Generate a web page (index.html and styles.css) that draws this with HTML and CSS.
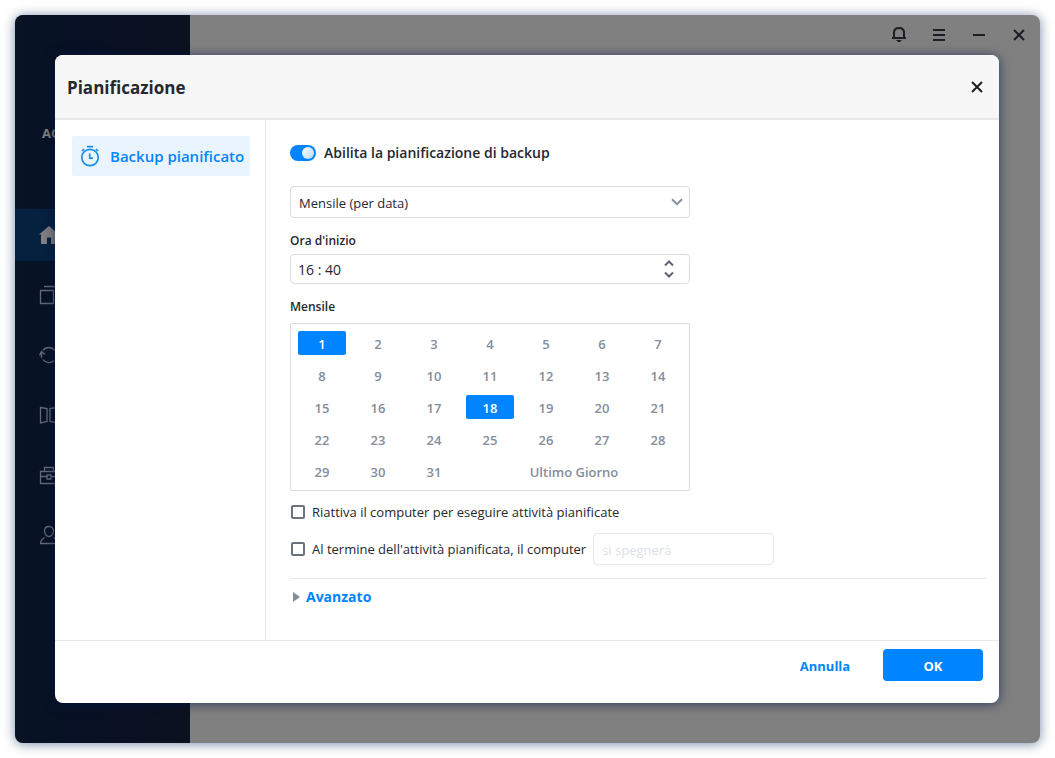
FILE: index.html
```html
<!DOCTYPE html>
<html lang="it">
<head>
  <meta charset="UTF-8">
  <meta name="viewport" content="width=device-width, initial-scale=1.0">
  <title>Pianificazione</title>
  <link rel="stylesheet" href="styles.css">
</head>
<body>
  <div class="window">
    <aside class="sidebar">
      <div class="brand">AO</div>
      <nav class="menu">
        <a href="#" class="menu-item active" aria-label="Home">
          <svg width="20" height="20" viewBox="0 0 20 20"><path d="M10 1 0 9.500h2V19h6v-6.500h4V19h6V9.500h2z" fill="currentColor"/></svg>
        </a>
        <a href="#" class="menu-item" aria-label="Backup">
          <svg width="20" height="20" viewBox="0 0 20 20" class="line"><path d="M1.500 5.500h13v13h-13zM5 1.500h13.500V15"/></svg>
        </a>
        <a href="#" class="menu-item" aria-label="Sync">
          <svg width="20" height="20" viewBox="0 0 20 20" class="line"><path d="M4 5.500A7 7 0 0 1 15.500 5.500M17 9a7 7 0 0 1-.5 3.500M15 15.500a7 7 0 0 1-11-1M2.500 13V7M.5 10.500l2-4 3.500 3"/></svg>
        </a>
        <a href="#" class="menu-item" aria-label="Clone">
          <svg width="20" height="20" viewBox="0 0 20 20" class="line"><path d="M1.500 2.500 8 3.500v13l-6.500 1.500zM18.500 2.500 11 3.500v13l7.500 1.500z"/></svg>
        </a>
        <a href="#" class="menu-item" aria-label="Tools">
          <svg width="20" height="20" viewBox="0 0 20 20" class="line"><path d="M1.500 6.500h17v12h-17zM5.500 6V2.500h9V6M1.500 11.500H8M12 11.500h6.500M8 10h4v4H8z"/></svg>
        </a>
        <a href="#" class="menu-item" aria-label="Account">
          <svg width="20" height="20" viewBox="0 0 20 20" class="line"><path d="M10 1.500c-3 0-4.500 2-4.500 4.500 0 3 2 5.500 4.500 5.500s4.500-2.500 4.500-5.500c0-2.500-1.500-4.500-4.500-4.500zM5.500 12.500C3 14 1.500 15.500 1.500 18.500h17c0-3-1.500-4.500-4-6"/></svg>
        </a>
      </nav>
    </aside>
    <div class="titlebar">
      <button type="button" class="icon-button" aria-label="Notifiche">
        <svg width="16" height="16" viewBox="0 0 16 16"><path d="M3 11V5.500C3 2.500 5 1 8 1s5 1.500 5 4.500V11M1 11h14"/><path d="M5 13h6l-2 2H7z" fill="currentColor" stroke="none"/></svg>
      </button>
      <button type="button" class="icon-button" aria-label="Menu">
        <svg width="16" height="16" viewBox="0 0 16 16"><path d="M2 3h12M2 8h12M2 13h12"/></svg>
      </button>
      <button type="button" class="icon-button" aria-label="Riduci">
        <svg width="16" height="16" viewBox="0 0 16 16"><path d="M2 8h12"/></svg>
      </button>
      <button type="button" class="icon-button" aria-label="Esci">
        <svg width="16" height="16" viewBox="0 0 16 16"><path d="m3 3 10 10M13 3 3 13"/></svg>
      </button>
    </div>

    <section class="dialog" role="dialog" aria-labelledby="dialog-title">
      <header class="dialog-header">
        <h1 id="dialog-title">Pianificazione</h1>
        <button type="button" class="icon-button" aria-label="Chiudi">
          <svg width="16" height="16" viewBox="0 0 16 16"><path d="m3 3 10 10M13 3 3 13"/></svg>
        </button>
      </header>

      <div class="dialog-body">
        <nav class="tabs">
          <a href="#" class="tab">
            <svg width="20" height="22" viewBox="0 0 20 22"><circle cx="10" cy="12.500" r="8.200"/><path d="M7 1.700h6M2 6l2-2M18 6l-2-2M9.700 8.500v4.700H13"/></svg>
            Backup pianificato
          </a>
        </nav>

        <form class="settings">
          <label class="switch-row">
            <input type="checkbox" class="switch" checked>
            Abilita la pianificazione di backup
          </label>

          <div class="select-wrap">
            <select class="control" aria-label="Frequenza">
              <option>Mensile (per data)</option>
            </select>
            <svg class="chevron" width="12" height="8" viewBox="0 0 12 8"><path d="m1 1.200 5 5 5-5"/></svg>
          </div>

          <label class="field-label" for="start-time">Ora d'inizio</label>
          <div class="time-box">
            <input type="text" id="start-time" value="16 : 40">
            <div class="spin">
              <button type="button" aria-label="Aumenta"><svg width="10" height="7" viewBox="0 0 10 7"><path d="m1 5.500 4-4 4 4"/></svg></button>
              <button type="button" aria-label="Diminuisci"><svg width="10" height="7" viewBox="0 0 10 7"><path d="m1 1.500 4 4 4-4"/></svg></button>
            </div>
          </div>

          <div class="field-label" id="month-label">Mensile</div>
          <div class="days" role="group" aria-labelledby="month-label">
            <button type="button" class="selected" aria-pressed="true">1</button>
            <button type="button">2</button>
            <button type="button">3</button>
            <button type="button">4</button>
            <button type="button">5</button>
            <button type="button">6</button>
            <button type="button">7</button>
            <button type="button">8</button>
            <button type="button">9</button>
            <button type="button">10</button>
            <button type="button">11</button>
            <button type="button">12</button>
            <button type="button">13</button>
            <button type="button">14</button>
            <button type="button">15</button>
            <button type="button">16</button>
            <button type="button">17</button>
            <button type="button" class="selected" aria-pressed="true">18</button>
            <button type="button">19</button>
            <button type="button">20</button>
            <button type="button">21</button>
            <button type="button">22</button>
            <button type="button">23</button>
            <button type="button">24</button>
            <button type="button">25</button>
            <button type="button">26</button>
            <button type="button">27</button>
            <button type="button">28</button>
            <button type="button">29</button>
            <button type="button">30</button>
            <button type="button">31</button>
            <button type="button" class="last-day">Ultimo Giorno</button>
          </div>

          <div class="check-row">
            <input type="checkbox" class="check" id="wake">
            <label for="wake">Riattiva il computer per eseguire attività pianificate</label>
          </div>
          <div class="check-row">
            <input type="checkbox" class="check" id="after">
            <label for="after">Al termine dell'attività pianificata, il computer</label>
            <select class="control after-action" aria-label="Azione al termine" disabled>
              <option>si spegnerà</option>
            </select>
          </div>

          <div class="advanced">
            <button type="button" aria-expanded="false">Avanzato</button>
          </div>
        </form>
      </div>

      <footer class="dialog-footer">
        <button type="button" class="btn">Annulla</button>
        <button type="button" class="btn primary">OK</button>
      </footer>
    </section>
  </div>
</body>
</html>
```
FILE: styles.css
```css
* {
  margin: 0;
  padding: 0;
  box-sizing: border-box;
}
body {
  min-height: 100vh;
  padding: 15px;
  display: flex;
  background-color: #fff;
  color: #24282f;
  font-family: "Segoe UI", "Open Sans", "Noto Sans", sans-serif;
  font-size: 13px;
  line-height: 20px;
}
button, input, select {
  font: inherit;
  color: inherit;
}
button {
  border: none;
  background: none;
  cursor: pointer;
}
svg {
  display: block;
  flex: none;
  fill: none;
  stroke: currentColor;
  stroke-width: 2;
}
a {
  text-decoration: none;
}

/* main window */
.window {
  position: relative;
  flex: 1;
  display: flex;
  background-color: #808080;
  border-radius: 8px;
  box-shadow: 0 1px 12px rgba(30, 60, 110, 0.6);
}
.sidebar {
  width: 175px;
  background: linear-gradient(90deg, #071424, #071024 35%, #0c111f);
  border-radius: 8px 0 0 8px;
}
.brand {
  height: 194px;
  padding: 108px 0 0 27px;
  color: #808080;
  font-weight: 700;
}
.menu-item {
  display: flex;
  align-items: center;
  height: 52px;
  margin-bottom: 8px;
  padding-left: 24px;
  color: #626a74;
}
.menu-item.active {
  background-color: #062040;
  color: #808080;
}
.menu-item svg {
  stroke: none;
}
.menu-item .line {
  stroke: currentColor;
  stroke-width: 1.3;
}
.titlebar {
  flex: 1;
  display: flex;
  justify-content: flex-end;
  gap: 16px;
  padding: 8px 9px;
}
.icon-button {
  display: flex;
  align-items: center;
  justify-content: center;
  width: 24px;
  height: 24px;
  color: #1b1e24;
}

/* dialog */
.dialog {
  position: absolute;
  inset: 40px 41px 40px 40px;
  display: flex;
  flex-direction: column;
  background-color: #fff;
  border-radius: 8px;
  box-shadow: 0 1px 12px rgba(0, 20, 70, 0.65);
}
.dialog-header {
  display: flex;
  align-items: center;
  justify-content: space-between;
  height: 65px;
  padding: 0 10px 0 12px;
  background-color: #f7f7f7;
  border-bottom: 2px solid #e7e8e9;
  border-radius: 8px 8px 0 0;
}
.dialog-header h1 {
  padding-top: 2px;
  font-size: 17px;
  font-weight: 700;
  line-height: 24px;
}
.dialog-body {
  flex: 1;
  display: flex;
}
.tabs {
  width: 211px;
  padding: 16px 15px 16px 17px;
  border-right: 1px solid #e7e8e9;
}
.tab {
  display: flex;
  align-items: center;
  gap: 10px;
  height: 40px;
  padding-left: 8px;
  background-color: #eaf4ff;
  border-radius: 2px;
  color: #0084ff;
  font-size: 15px;
  font-weight: 600;
  white-space: nowrap;
}
.tab svg {
  stroke: #1690ea;
  stroke-width: 1.7;
}

.settings {
  flex: 1;
  padding: 24px 13px 0 24px;
}
.switch-row {
  display: flex;
  align-items: center;
  gap: 8px;
  height: 18px;
  font-size: 14px;
  font-weight: 600;
}
.switch {
  appearance: none;
  display: flex;
  justify-content: flex-end;
  width: 26px;
  height: 16px;
  padding: 2px;
  background-color: #0084ff;
  border-radius: 8px;
}
.switch::before {
  content: "";
  width: 12px;
  height: 12px;
  background: linear-gradient(135deg, #fff, #b5dbff);
  border-radius: 50%;
}
.control {
  appearance: none;
  width: 100%;
  height: 32px;
  padding: 2px 8px 0;
  background-color: #fff;
  border: 1px solid #d9dce3;
  border-radius: 4px;
}
.select-wrap {
  position: relative;
  max-width: 400px;
  margin-top: 24px;
}
.chevron {
  position: absolute;
  top: 12px;
  right: 7px;
  color: #868e9b;
  pointer-events: none;
}
.field-label {
  display: block;
  margin-top: 15px;
  font-size: 12px;
  font-weight: 600;
  line-height: 16px;
}
.time-box {
  display: flex;
  max-width: 400px;
  height: 30px;
  margin-top: 5px;
  padding: 0 15px 0 7px;
  border: 1px solid #d9dce3;
  border-radius: 4px;
}
.time-box input {
  flex: 1;
  min-width: 0;
  padding-top: 2px;
  border: none;
  background: none;
  outline: none;
  font-size: 14px;
}
.spin {
  display: flex;
  flex-direction: column;
  justify-content: center;
  gap: 4px;
  color: #5f6671;
}
.spin button {
  color: inherit;
}
.days {
  display: grid;
  grid-template-columns: repeat(7, 1fr);
  grid-auto-rows: 24px;
  gap: 8px;
  max-width: 400px;
  margin-top: 8px;
  padding: 7px;
  border: 1px solid #d9dce3;
  border-radius: 2px;
}
.days button {
  padding-top: 2px;
  border-radius: 2px;
  color: #868e9b;
  font-weight: 600;
}
.days .selected {
  background-color: #0084ff;
  color: #fff;
}
.days .last-day {
  grid-column: span 4;
}
.check-row {
  display: flex;
  align-items: center;
  gap: 7px;
  margin-top: 11px;
}
.check {
  appearance: none;
  width: 14px;
  height: 14px;
  margin-left: 1px;
  border: 2px solid #6b727d;
  border-radius: 2px;
}
.after-action {
  width: 181px;
}
.after-action:disabled {
  border-color: #e7e8ea;
  color: #dadfe7;
  opacity: 1;
}
.advanced {
  margin-top: 13px;
  padding-top: 8px;
  border-top: 1px solid #e7e8e9;
}
.advanced button {
  display: flex;
  align-items: center;
  gap: 6px;
  padding-left: 3px;
  color: #0084ff;
  font-size: 14px;
  font-weight: 700;
}
.advanced button::before {
  content: "";
  border: 5px solid transparent;
  border-left: 7px solid #868e9b;
  border-right: none;
}

.dialog-footer {
  display: flex;
  justify-content: flex-end;
  gap: 8px;
  height: 63px;
  padding: 8px 16px;
  border-top: 1px solid #e7e8e9;
}
.btn {
  width: 100px;
  height: 32px;
  padding-top: 2px;
  border-radius: 4px;
  color: #0084ff;
  font-weight: 700;
}
.btn.primary {
  background-color: #0084ff;
  color: #fff;
}
```
